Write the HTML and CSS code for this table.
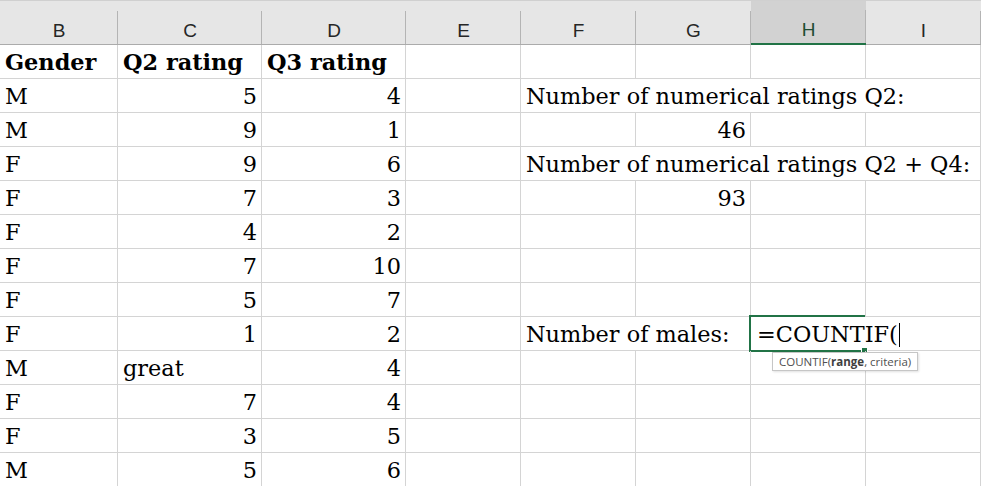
FILE: index.html
```html
<!DOCTYPE html>
<html>
<head>
<meta charset="utf-8">
<link rel="stylesheet" href="styles.css">
</head>
<body>
<div class="sheet">
  <div class="hd">B</div><div class="hd">C</div><div class="hd">D</div><div class="hd">E</div><div class="hd">F</div><div class="hd">G</div><div class="hd hd-sel">H</div><div class="hd">I</div>

  <div class="c b">Gender</div><div class="c b">Q2 rating</div><div class="c b">Q3 rating</div><div class="c"></div><div class="c"></div><div class="c"></div><div class="c"></div><div class="c"></div>

  <div class="c">M</div><div class="c n">5</div><div class="c n">4</div><div class="c"></div><div class="c span4">Number of numerical ratings Q2:</div>

  <div class="c">M</div><div class="c n">9</div><div class="c n">1</div><div class="c"></div><div class="c"></div><div class="c n">46</div><div class="c"></div><div class="c"></div>

  <div class="c">F</div><div class="c n">9</div><div class="c n">6</div><div class="c"></div><div class="c span4">Number of numerical ratings Q2 + Q4:</div>

  <div class="c">F</div><div class="c n">7</div><div class="c n">3</div><div class="c"></div><div class="c"></div><div class="c n">93</div><div class="c"></div><div class="c"></div>

  <div class="c">F</div><div class="c n">4</div><div class="c n">2</div><div class="c"></div><div class="c"></div><div class="c"></div><div class="c"></div><div class="c"></div>

  <div class="c">F</div><div class="c n">7</div><div class="c n">10</div><div class="c"></div><div class="c"></div><div class="c"></div><div class="c"></div><div class="c"></div>

  <div class="c">F</div><div class="c n">5</div><div class="c n">7</div><div class="c"></div><div class="c"></div><div class="c"></div><div class="c"></div><div class="c"></div>

  <div class="c">F</div><div class="c n">1</div><div class="c n">2</div><div class="c"></div><div class="c span2">Number of males:</div>
  <div class="c span2 active"><span class="edit">=COUNTIF(</span><span class="caret"></span><span class="sel-box"><span class="handle"></span></span><span class="tip">COUNTIF(<b>range</b>, criteria)</span></div>

  <div class="c">M</div><div class="c">great</div><div class="c n">4</div><div class="c"></div><div class="c"></div><div class="c"></div><div class="c"></div><div class="c"></div>

  <div class="c">F</div><div class="c n">7</div><div class="c n">4</div><div class="c"></div><div class="c"></div><div class="c"></div><div class="c"></div><div class="c"></div>

  <div class="c">F</div><div class="c n">3</div><div class="c n">5</div><div class="c"></div><div class="c"></div><div class="c"></div><div class="c"></div><div class="c"></div>

  <div class="c">M</div><div class="c n">5</div><div class="c n">6</div><div class="c"></div><div class="c"></div><div class="c"></div><div class="c"></div><div class="c"></div>
</div>
</body>
</html>
```
FILE: styles.css
```css
html, body {
  margin: 0;
  padding: 0;
  background: #ffffff;
  overflow: hidden;
}

.sheet {
  display: grid;
  grid-template-columns: 118px 144px 144px repeat(5, 115px);
  grid-template-rows: 45px repeat(13, 34px);
  width: 981px;
}

.hd {
  box-sizing: border-box;
  height: 45px;
  border-top: 1px solid #d0d0d0;
  border-bottom: 1px solid #ababab;
  background-color: #e6e6e6;
  background-image: linear-gradient(#b4b4b4, #b4b4b4);
  background-size: 1px 33px;
  background-position: right bottom;
  background-repeat: no-repeat;
  display: flex;
  align-items: center;
  justify-content: center;
  padding-top: 16px;
  font-family: "Liberation Sans", Arial, sans-serif;
  font-size: 19px;
  color: #262626;
}

.hd-sel {
  background-color: #d2d2d2;
  border-bottom: 2px solid #217346;
  color: #1e4d33;
  padding-top: 15px;
}

.c {
  box-sizing: border-box;
  position: relative;
  border-right: 1px solid #d4d4d4;
  border-bottom: 1px solid #d4d4d4;
  display: flex;
  align-items: flex-end;
  padding: 0 4px 2px 5px;
  font-family: "DejaVu Serif", "Liberation Serif", Georgia, serif;
  font-size: 22.4px;
  line-height: 27px;
  color: #000;
  white-space: nowrap;
}

.b {
  font-weight: bold;
}

.n {
  justify-content: flex-end;
}

.span2 {
  grid-column: span 2;
}

.span4 {
  grid-column: span 4;
}

.active {
  padding-left: 6px;
}

.caret {
  display: inline-block;
  width: 1px;
  height: 24px;
  background: #000;
  margin-left: 1px;
  margin-bottom: 1px;
}

.sel-box {
  position: absolute;
  left: -2px;
  top: -2px;
  width: 116px;
  height: 37px;
  box-sizing: border-box;
  border: 2px solid #217346;
  border-right: none;
}

.handle {
  position: absolute;
  right: -3px;
  bottom: -4px;
  width: 5px;
  height: 5px;
  background: #217346;
  border: 1px solid #fff;
}

.tip {
  position: absolute;
  left: 21px;
  top: 35px;
  z-index: 2;
  box-sizing: border-box;
  height: 19px;
  padding: 0 6px;
  background: #fff;
  border: 1px solid #c6c6c6;
  box-shadow: 1px 1px 2px rgba(0, 0, 0, 0.12);
  font-family: "Open Sans", "Noto Sans", sans-serif;
  font-size: 11.5px;
  line-height: 17px;
  color: #505050;
}

.tip b {
  font-weight: bold;
  color: #404040;
}
```
